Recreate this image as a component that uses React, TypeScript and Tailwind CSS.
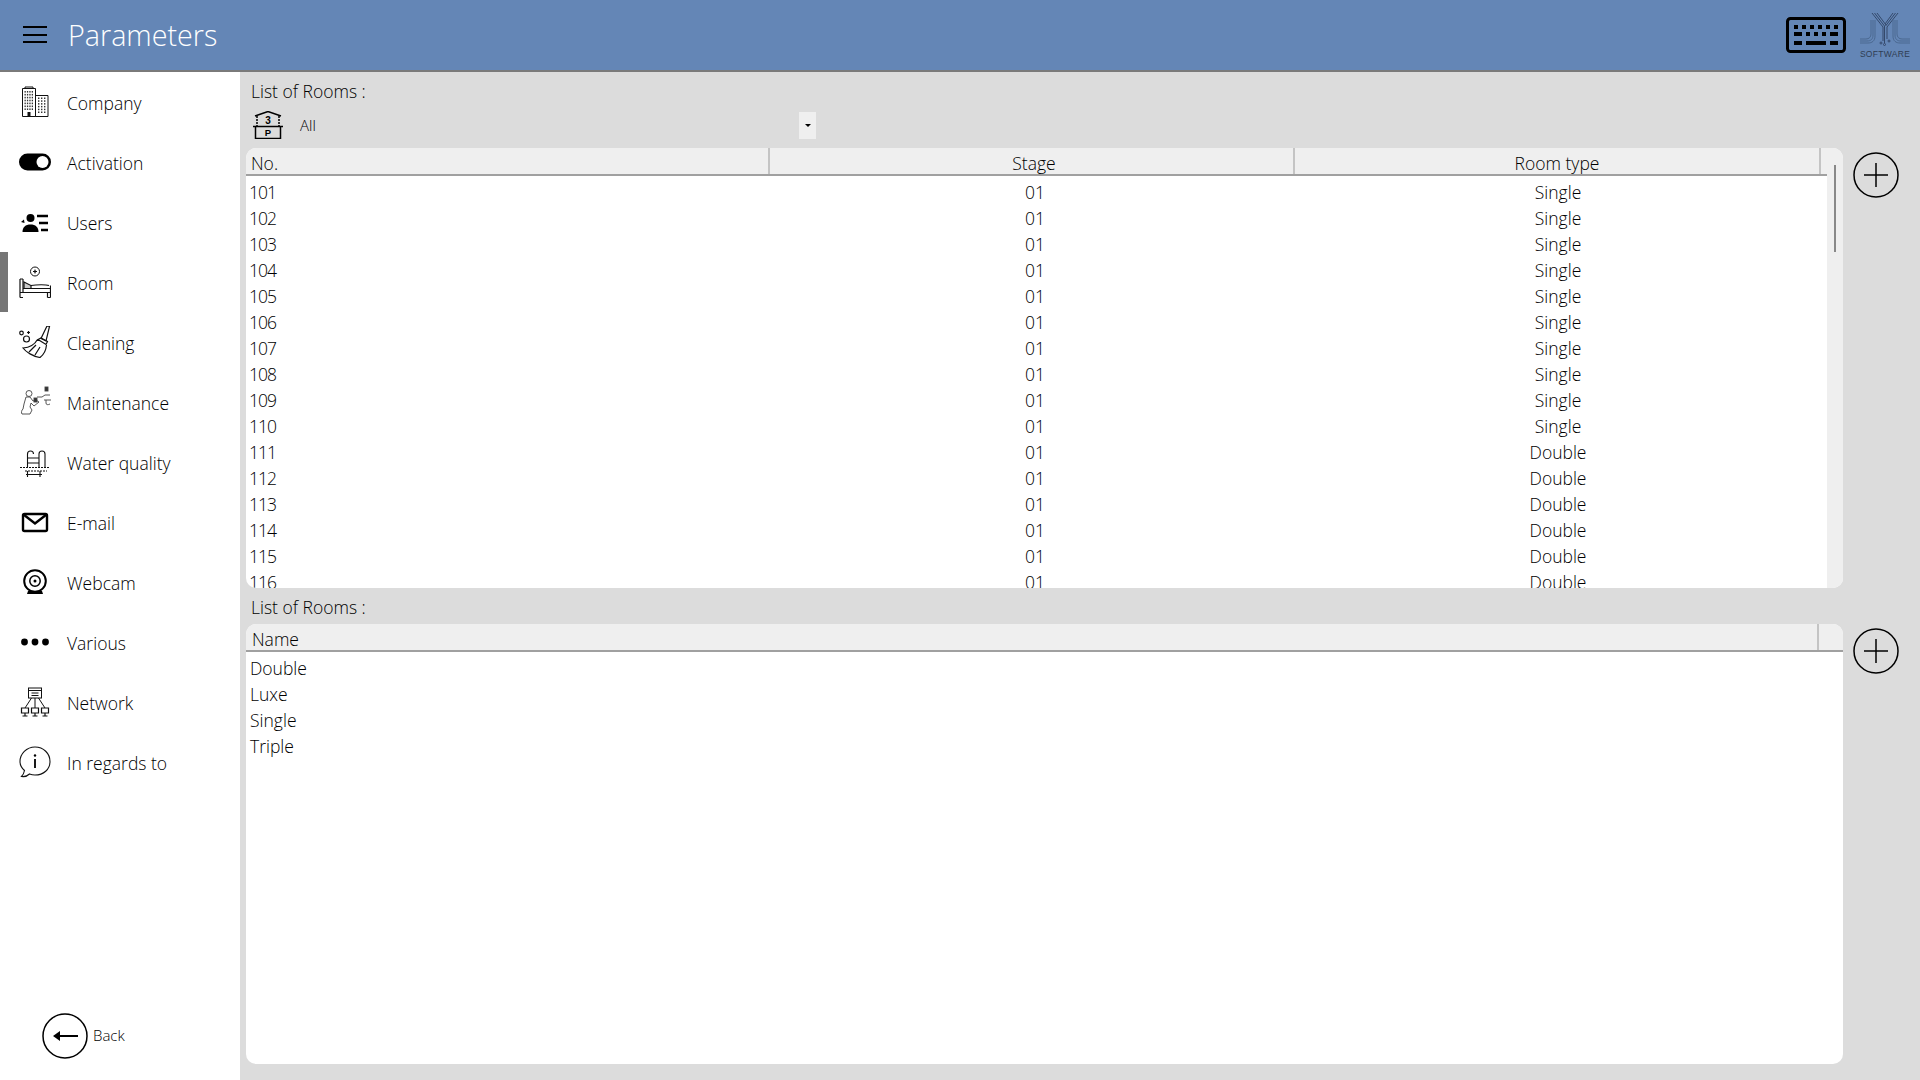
import { ReactNode } from "react"

const font = "font-['Open_Sans','Liberation_Sans',sans-serif]"

// Room list, in the order shown on screen
const rooms = Array.from({ length: 16 }, (_, i) => ({
  no: String(101 + i),
  stage: "01",
  type: i < 10 ? "Single" : "Double",
}))

const roomTypes = ["Double", "Luxe", "Single", "Triple"]

function Svg({ children, size = 32 }: { children: ReactNode; size?: number }) {
  return (
    <svg width={size} height={size} viewBox="0 0 32 32" fill="none" stroke="#111" strokeWidth="1">
      {children}
    </svg>
  )
}

function CompanyIcon() {
  const windows = []
  for (let r = 0; r < 7; r++) {
    for (let c = 0; c < 4; c++) {
      windows.push(<rect key={`a${r}${c}`} x={5.5 + c * 2.4} y={5 + r * 2.9} width="1.3" height="1.6" fill="#333" stroke="none" />)
    }
  }
  for (let r = 0; r < 6; r++) {
    for (let c = 0; c < 3; c++) {
      windows.push(<rect key={`b${r}${c}`} x={19 + c * 3} y={11.5 + r * 2.8} width="1.4" height="1.5" fill="#333" stroke="none" />)
    }
  }
  return (
    <Svg>
      <path d="M3.5 30.5V2.5h13v28zM16.5 9.5h12.500v21h-12.500zM6 2.500V1h8v1.500" />
      <rect x="8.500" y="26" width="3" height="4.500" fill="#111" stroke="none" />
      {windows}
    </Svg>
  )
}

function ToggleIcon() {
  return (
    <Svg>
      <rect x="0" y="7.500" width="32" height="17" rx="8.500" fill="#000" stroke="none" />
      <circle cx="23.500" cy="16" r="6" fill="#fff" stroke="none" />
    </Svg>
  )
}

function UsersIcon() {
  return (
    <Svg>
      <circle cx="11.500" cy="12" r="4" fill="#000" stroke="none" />
      <path d="M3.500 26c0-5 3-7.500 8-7.500s8 2.500 8 7.500z" fill="#000" stroke="none" />
      <path d="M2 16l3-2.500.5 3.500z" fill="#000" stroke="none" />
      <path d="M18 10h11M20 17h9M22 24h7" stroke="#000" strokeWidth="2.400" />
    </Svg>
  )
}

function RoomIcon() {
  return (
    <Svg>
      <circle cx="16" cy="5.500" r="4.500" />
      <path d="M14 5.500h4M16 3.500v4" />
      <circle cx="16" cy="5.500" r="1" fill="#111" stroke="none" />
      <path d="M1 13v18.500M4 13v13M1 13h3M1 26.500h30M4 22.500h28M31.500 31.500V19.500M28.500 31.500V26.500M1 31.500h3M28.500 31.500h3" strokeWidth="1.200" />
      <path d="M12 19.500c6-1 15-1 18 0" strokeWidth="1.200" />
      <path d="M5 16l7 3.500v3H5z" fill="#ccc" strokeWidth="1.200" />
    </Svg>
  )
}

function CleaningIcon() {
  return (
    <Svg>
      <circle cx="2.500" cy="7" r="1.800" strokeWidth="1.200" />
      <circle cx="7.500" cy="13" r="3" strokeWidth="1.200" />
      <path d="M8 6.500h3M9.500 5v3" strokeWidth="1.200" />
      <path d="M30.500 .5l-2.500-.5-6 12.500 5 2.500z" strokeWidth="1.200" />
      <path d="M19 13.500l3-1.500 6.500 3.500-1.500 3zM18.500 13.500C16 18 11 21.500 4 22c3 4 10 8.500 17 9.500 4-3 6-7 6.500-12.500" strokeWidth="1.200" />
      <path d="M10 26l7-7M16 29l5-8" strokeWidth="1.200" />
    </Svg>
  )
}

function MaintenanceIcon() {
  return (
    <Svg>
      <g stroke="#444" strokeWidth="0.900">
        <circle cx="10" cy="7.500" r="3" />
        <path d="M7 11l-2 7-1 5c-1.500 1-2 4-1 5h8l2-4-2-3 1-4 3 3 5-4-3-2-3 1-3-4z" />
        <path d="M18 11h5l3-2h5M25 14h7M27 14v3c0 2 2 2 4 1" />
        <rect x="26" y="1" width="3" height="4" fill="#333" />
        <rect x="15" y="12" width="3" height="4" fill="#333" />
      </g>
    </Svg>
  )
}

function WaterIcon() {
  return (
    <Svg>
      <g strokeWidth="1.100">
        <path d="M8.500 21V8c0-4 6-4 6 0M20 21V8c0-4 6-4 6 0v13M8.500 12h11.500M8.500 17h11.500" />
        <path d="M1 21.500h30" strokeDasharray="2 1" />
        <path d="M6 25h22" strokeDasharray="2 1" />
        <path d="M7 28.500h16M8.500 25v6M21 25v6" />
      </g>
    </Svg>
  )
}

function MailIcon() {
  return (
    <Svg>
      <rect x="4" y="8" width="24" height="17" rx="1.500" stroke="#000" strokeWidth="2.400" />
      <path d="M4.500 8.500L16 17.500l11.500-9" stroke="#000" strokeWidth="2.400" />
    </Svg>
  )
}

function WebcamIcon() {
  return (
    <Svg>
      <circle cx="16" cy="15" r="10.800" stroke="#000" strokeWidth="2" />
      <circle cx="16" cy="15" r="5.200" stroke="#000" strokeWidth="1.500" />
      <circle cx="16" cy="15" r="1.500" fill="#000" stroke="none" />
      <path d="M9 25h14l1 3H8z" fill="#000" stroke="none" />
    </Svg>
  )
}

function DotsIcon() {
  return (
    <Svg>
      <circle cx="5.500" cy="16" r="3.400" fill="#000" stroke="none" />
      <circle cx="16" cy="16" r="3.400" fill="#000" stroke="none" />
      <circle cx="26.500" cy="16" r="3.400" fill="#000" stroke="none" />
    </Svg>
  )
}

function NetworkIcon() {
  return (
    <Svg>
      <rect x="9.500" y="2" width="13" height="10" />
      <path d="M9.500 4.500h13M12.500 7h7M12.500 9.500h7" />
      <path d="M12.500 12l-6.500 10M16 12v10M19.500 12l6.500 10" />
      <path d="M2.500 22h7v5h-7zM12.500 22h7v5h-7zM22.500 22h7v5h-7zM6 27v2.500M3.500 30h5M16 27v2.500M13.500 30h5M26 27v2.500M23.500 30h5" strokeWidth="1.200" />
    </Svg>
  )
}

function InfoIcon() {
  return (
    <Svg>
      <path d="M5.500 24.500C2.500 22 1 19 1 15.500 1 8 7.500 1 16 1s15 6.500 15 14.500S24.500 29 16 29c-2 0-4-.4-5.500-1-1.500 1.500-4.500 3-8 2.500 1.500-1.500 2.500-3.500 3-6z" strokeWidth="1.100" />
      <circle cx="16" cy="9.500" r="1.200" fill="#000" stroke="none" />
      <path d="M16 13v9" stroke="#000" strokeWidth="1.800" />
    </Svg>
  )
}

const navItems = [
  { label: "Company", icon: <CompanyIcon /> },
  { label: "Activation", icon: <ToggleIcon /> },
  { label: "Users", icon: <UsersIcon /> },
  { label: "Room", icon: <RoomIcon />, active: true },
  { label: "Cleaning", icon: <CleaningIcon /> },
  { label: "Maintenance", icon: <MaintenanceIcon /> },
  { label: "Water quality", icon: <WaterIcon /> },
  { label: "E-mail", icon: <MailIcon /> },
  { label: "Webcam", icon: <WebcamIcon /> },
  { label: "Various", icon: <DotsIcon /> },
  { label: "Network", icon: <NetworkIcon /> },
  { label: "In regards to", icon: <InfoIcon /> },
]

function AddButton() {
  return (
    <svg width="46" height="46" viewBox="0 0 46 46" fill="none" stroke="#000">
      <circle cx="23" cy="23" r="22" strokeWidth="1.500" />
      <path d="M11 23h24M23 11v24" strokeWidth="1.500" />
    </svg>
  )
}

function Logo() {
  return (
    <div className="flex w-[50px] flex-col items-center">
      <svg width="50" height="34" viewBox="0 0 50 34" fill="none" stroke="#34496b" strokeWidth="1">
        <path d="M12 0l11 14v14M14.500 0L24.500 13v17M17 0l9 12M38 0L27 14v12M35.500 0L25.500 13M33 0l-8 11" />
        <path d="M13 7v15c0 4-2 6-6 6H0M15 7v16c0 5-3 7-7 7H0M11 7v14c0 3-2 5-5 5H0" stroke="#4a6890" />
        <path d="M35 7v15c0 4 2 6 6 6h9M37 7v14c0 3 2 5 5 5h8M33 7v16c0 5 3 7 7 7h10" stroke="#4a6890" />
        <circle cx="21" cy="30" r="1" />
        <circle cx="24.500" cy="31.500" r="1" />
        <circle cx="29" cy="28" r="1" />
      </svg>
      <span className="mt-[3px] font-['Liberation_Sans',sans-serif] text-[8.500px] leading-[8px] font-normal tracking-[0.300px] whitespace-nowrap text-[#2f3d52]">SOFTWARE</span>
    </div>
  )
}

function KeyboardIcon() {
  return (
    <svg width="60" height="36" viewBox="0 0 60 36">
      <rect x="1.500" y="1.500" width="57" height="33" rx="3" fill="none" stroke="#000" strokeWidth="3" />
      {[8, 16, 24, 32, 40, 48].map((x) => (
        <rect key={x} x={x} y="8" width="4" height="4" />
      ))}
      <rect x="8" y="15" width="8" height="4" />
      {[20, 28, 36].map((x) => (
        <rect key={x} x={x} y="15" width="4" height="4" />
      ))}
      <rect x="44" y="15" width="8" height="4" />
      <rect x="8" y="24" width="8" height="4" />
      <rect x="20" y="24" width="20" height="4" />
      <rect x="44" y="24" width="8" height="4" />
    </svg>
  )
}

function FloorIcon() {
  return (
    <svg width="30" height="28" viewBox="0 0 30 28" fill="none" stroke="#000">
      <path d="M2 5l13-4.500L28 5" strokeWidth="1.500" />
      <path d="M4 5v10M26 5v10" strokeWidth="1.500" strokeDasharray="2 1" />
      <path d="M0 15.500h30M2.500 16v11.500h25V16" strokeWidth="1.500" />
      <text x="15" y="12.500" textAnchor="middle" fontSize="10" fontWeight="700" fill="#000" stroke="none" fontFamily="Liberation Sans">3</text>
      <text x="15" y="25" textAnchor="middle" fontSize="9.500" fontWeight="700" fill="#000" stroke="none" fontFamily="Liberation Sans">P</text>
    </svg>
  )
}

export default function App() {
  return (
    <div className={`flex h-screen w-screen flex-col overflow-hidden bg-[#dcdcdc] font-light text-black ${font}`}>
      {/* Header */}
      <header className="flex h-[72px] shrink-0 items-center justify-between border-b-2 border-[#7a7a7a] bg-[#6486b6]">
        <div className="flex items-center">
          <div className="ml-[23px] flex w-[24px] flex-col gap-[5.500px]">
            <div className="h-[2px] bg-black" />
            <div className="h-[2px] bg-black" />
            <div className="h-[2px] bg-black" />
          </div>
          <h1 className="ml-[21px] text-[28.700px] font-light text-white">Parameters</h1>
        </div>
        <div className="mr-[10px] flex items-center gap-[14px]">
          <KeyboardIcon />
          <Logo />
        </div>
      </header>

      <div className="flex min-h-0 flex-1">
        {/* Sidebar */}
        <aside className="flex w-[240px] shrink-0 flex-col justify-between bg-white">
          <nav className="flex flex-col">
            {navItems.map((item) => (
              <div
                key={item.label}
                className={`flex h-[60px] items-center border-l-8 pl-[11px] ${item.active ? "border-[#767676]" : "border-transparent"}`}
              >
                {item.icon}
                <span className="mt-[2px] ml-[16px] text-[17.500px]">{item.label}</span>
              </div>
            ))}
          </nav>
          <div className="mb-[21px] ml-[42px] flex items-center gap-[5px]">
            <svg width="46" height="46" viewBox="0 0 46 46" fill="none" stroke="#000">
              <circle cx="23" cy="23" r="22" strokeWidth="1.500" />
              <path d="M13 23h23" strokeWidth="2" />
              <path d="M11 23l7-5v10z" fill="#000" stroke="none" />
            </svg>
            <span className="mb-[1px] text-[15px]">Back</span>
          </div>
        </aside>

        {/* Main */}
        <main className="flex min-w-0 flex-1 flex-col pb-[16px] pl-[6px]">
          <div className="flex h-[32px] items-end pl-[5px] text-[17.500px] leading-[26px]">List of Rooms :</div>
          <div className="flex h-[44px] w-[570px] items-center pb-[2px] pl-[7px]">
            <FloorIcon />
            <span className="ml-[17px] flex-1 text-[15px]">All</span>
            <div className="flex h-[27px] w-[17px] items-center justify-center bg-[#efefef]">
              <div className="h-0 w-0 border-x-[3px] border-t-[3px] border-x-transparent border-t-black" />
            </div>
          </div>

          <div className="flex h-[440px] gap-[10px]">
            <section className="flex w-[1597px] overflow-hidden rounded-[10px] bg-white">
              <div className="flex min-w-0 flex-1 flex-col">
                <div className="grid h-[28px] shrink-0 grid-cols-[524px_525px_526px_1fr] grid-rows-[26px] border-b-2 border-[#a0a0a0] bg-[#efefef] text-[17.500px] leading-[31px]">
                  <div className="border-r-2 border-[#c4c4c4] pl-[5px]">No.</div>
                  <div className="border-r-2 border-[#c4c4c4] pl-[5px] text-center">Stage</div>
                  <div className="border-r-2 border-[#c4c4c4] text-center">Room type</div>
                  <div />
                </div>
                <div className="min-h-0 flex-1 pt-[3px]">
                  {rooms.map((room) => (
                    <div key={room.no} className="grid h-[26px] grid-cols-[524px_525px_526px] text-[17.500px] leading-[26px]">
                      <div className="pl-[3px] tracking-[-1px]">{room.no}</div>
                      <div className="pl-[5px] text-center">{room.stage}</div>
                      <div className="text-center">{room.type}</div>
                    </div>
                  ))}
                </div>
              </div>
              <div className="flex w-[16px] shrink-0 justify-center bg-[#efefef]">
                <div className="mt-[17px] h-[87px] w-[2px] bg-[#888]" />
              </div>
            </section>
            <div className="pt-[4px]">
              <AddButton />
            </div>
          </div>

          <div className="flex h-[36px] items-center pt-[2px] pl-[5px] text-[17.500px]">List of Rooms :</div>

          <div className="flex min-h-0 flex-1 gap-[10px]">
            <section className="flex w-[1597px] flex-col overflow-hidden rounded-[10px] bg-white">
              <div className="flex h-[28px] shrink-0 border-b-2 border-[#a0a0a0] bg-[#efefef] text-[17.500px] leading-[31px]">
                <div className="flex-1 border-r-2 border-[#c4c4c4] pl-[6px]">Name</div>
                <div className="w-[24px]" />
              </div>
              <div className="pt-[3px]">
                {roomTypes.map((name) => (
                  <div key={name} className="h-[26px] pl-[4px] text-[17.500px] leading-[26px]">
                    {name}
                  </div>
                ))}
              </div>
            </section>
            <div className="pt-[4px]">
              <AddButton />
            </div>
          </div>
        </main>
      </div>
    </div>
  )
}
